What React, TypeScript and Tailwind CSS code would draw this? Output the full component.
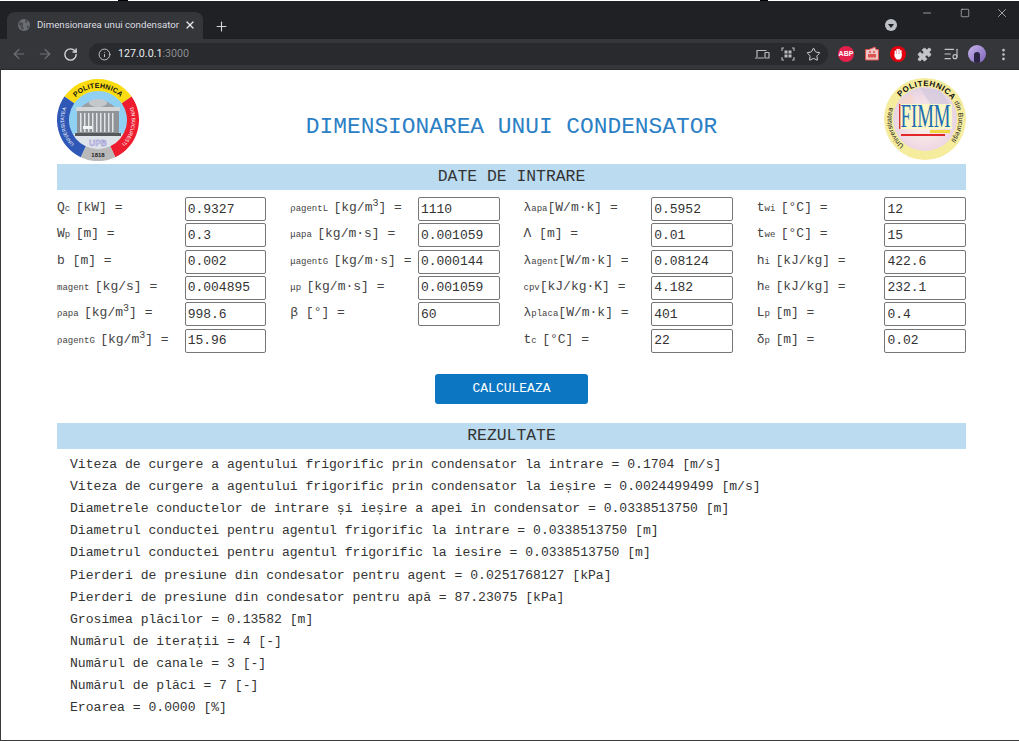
import React from "react";
import { ArrowLeft, ArrowRight, RotateCw, Info, Star, Puzzle, ListMusic, Plus, X, Minus, Square, MoreVertical } from "lucide-react";

const Sm = ({ children }: { children: React.ReactNode }) => <span className="text-[9px]">{children}</span>;
const Cube = () => <sup className="text-[10px] leading-none">3</sup>;

type Field = [React.ReactNode, string];
const columns: Field[][] = [
  [
    [<>Q<Sm>c </Sm>[kW] =</>, "0.9327"],
    [<>W<Sm>p </Sm>[m] =</>, "0.3"],
    [<>b [m] =</>, "0.002"],
    [<><Sm>magent </Sm>[kg/s] =</>, "0.004895"],
    [<><Sm>ρapa </Sm>[kg/m<Cube />] =</>, "998.6"],
    [<><Sm>ρagentG </Sm>[kg/m<Cube />] =</>, "15.96"],
  ],
  [
    [<><Sm>ρagentL </Sm>[kg/m<Cube />] =</>, "1110"],
    [<><Sm>μapa </Sm>[kg/m·s] =</>, "0.001059"],
    [<><Sm>μagentG </Sm>[kg/m·s] =</>, "0.000144"],
    [<><Sm>μp </Sm>[kg/m·s] =</>, "0.001059"],
    [<>β [°] =</>, "60"],
  ],
  [
    [<>λ<Sm>apa</Sm>[W/m·k] =</>, "0.5952"],
    [<>Λ [m] =</>, "0.01"],
    [<>λ<Sm>agent</Sm>[W/m·k] =</>, "0.08124"],
    [<><Sm>cpv</Sm>[kJ/kg·K] =</>, "4.182"],
    [<>λ<Sm>placa</Sm>[W/m·k] =</>, "401"],
    [<>t<Sm>c </Sm>[°C] =</>, "22"],
  ],
  [
    [<>t<Sm>wi </Sm>[°C] =</>, "12"],
    [<>t<Sm>we </Sm>[°C] =</>, "15"],
    [<>h<Sm>i </Sm>[kJ/kg] =</>, "422.6"],
    [<>h<Sm>e </Sm>[kJ/kg] =</>, "232.1"],
    [<>L<Sm>p </Sm>[m] =</>, "0.4"],
    [<>δ<Sm>p </Sm>[m] =</>, "0.02"],
  ],
];

const results = [
  "Viteza de curgere a agentului frigorific prin condensator la intrare = 0.1704 [m/s]",
  "Viteza de curgere a agentului frigorific prin condensator la ieșire = 0.0024499499 [m/s]",
  "Diametrele conductelor de intrare și ieșire a apei în condensator = 0.0338513750 [m]",
  "Diametrul conductei pentru agentul frigorific la intrare = 0.0338513750 [m]",
  "Diametrul conductei pentru agentul frigorific la iesire = 0.0338513750 [m]",
  "Pierderi de presiune din condesator pentru agent = 0.0251768127 [kPa]",
  "Pierderi de presiune din condesator pentru apă = 87.23075 [kPa]",
  "Grosimea plăcilor = 0.13582 [m]",
  "Numărul de iterații = 4 [-]",
  "Numărul de canale = 3 [-]",
  "Numărul de plăci = 7 [-]",
  "Eroarea = 0.0000 [%]",
];

function wedge(a0: number, a1: number, r0: number, r1: number, c = 41) {
  const p = (a: number, r: number) => {
    const t = ((a - 90) * Math.PI) / 180;
    return `${(c + r * Math.cos(t)).toFixed(2)} ${(c + r * Math.sin(t)).toFixed(2)}`;
  };
  const large = a1 - a0 > 180 ? 1 : 0;
  return `M${p(a0, r1)}A${r1} ${r1} 0 ${large} 1 ${p(a1, r1)}L${p(a1, r0)}A${r0} ${r0} 0 ${large} 0 ${p(a0, r0)}Z`;
}

function UpbLogo() {
  return (
    <svg width="82" height="82" viewBox="0 0 82 82" className="mt-px shrink-0">
      <defs>
        <path id="upbTop" d="M9 41A32 32 0 0 1 73 41" />
        <path id="upbLeft" d="M24.5 70.5A34 34 0 0 1 13.5 21" />
        <path id="upbRight" d="M68.5 21A34 34 0 0 1 57.5 70.5" />
      </defs>
      <circle cx="41" cy="41" r="29.5" fill="#8fd0f3" />
      <path d={wedge(120, 240, 0, 29.5)} fill="#dfe3ea" />
      <path d={wedge(-55, 55, 29, 41)} fill="#fbdc12" />
      <path d={wedge(55, 155, 29, 41)} fill="#ed1c2e" />
      <path d={wedge(155, 205, 29, 41)} fill="#b9b9b9" />
      <path d={wedge(205, 305, 29, 41)} fill="#2f57b5" />
      <path d="M24 28Q41 14 58 28Z" fill="#9a9fa3" />
      <ellipse cx="41" cy="24" rx="9" ry="4" fill="#c4c8cb" />
      <rect x="19" y="28" width="44" height="4" fill="#d4d6d8" />
      <rect x="20" y="32" width="42" height="24" fill="#8f9397" />
      <rect x="23" y="34" width="1.5" height="19" fill="#e2e4e5" />
      <rect x="27" y="34" width="1.5" height="19" fill="#e2e4e5" />
      <rect x="31" y="34" width="1.5" height="19" fill="#e2e4e5" />
      <rect x="35" y="34" width="1.5" height="19" fill="#e2e4e5" />
      <rect x="39" y="34" width="1.5" height="19" fill="#e2e4e5" />
      <rect x="43" y="34" width="1.5" height="19" fill="#e2e4e5" />
      <rect x="47" y="34" width="1.5" height="19" fill="#e2e4e5" />
      <rect x="51" y="34" width="1.5" height="19" fill="#e2e4e5" />
      <rect x="55" y="34" width="1.5" height="19" fill="#e2e4e5" />
      <rect x="26" y="47" width="9" height="3" fill="#f4f4f4" />
      <rect x="18" y="54" width="46" height="3" fill="#55595c" />
      <text x="41" y="67" textAnchor="middle" fontFamily="Liberation Sans, sans-serif" fontWeight="700" fontSize="8.5" fill="#c7c4ee" stroke="#8f8cc9" strokeWidth="0.3">UPB</text>
      <text x="41" y="77.5" textAnchor="middle" fontFamily="Liberation Sans, sans-serif" fontWeight="700" fontSize="6" fill="#222">1818</text>
      <text fontFamily="Liberation Sans, sans-serif" fontWeight="700" fontSize="7" fill="#111" letterSpacing="0.2">
        <textPath href="#upbTop" startOffset="50%" textAnchor="middle">POLITEHNICA</textPath>
      </text>
      <text fontFamily="Liberation Sans, sans-serif" fontSize="5" fill="#fff">
        <textPath href="#upbLeft" startOffset="50%" textAnchor="middle">UNIVERSITATEA</textPath>
      </text>
      <text fontFamily="Liberation Sans, sans-serif" fontSize="5" fill="#fff">
        <textPath href="#upbRight" startOffset="50%" textAnchor="middle">DIN BUCURESTI</textPath>
      </text>
    </svg>
  );
}

function FimmLogo() {
  return (
    <svg width="82" height="82" viewBox="0 0 82 82" className="shrink-0">
      <defs>
        <radialGradient id="fimmBg" cx="0.5" cy="0.55" r="0.55">
          <stop offset="0" stopColor="#fbf7e8" />
          <stop offset="0.7" stopColor="#f1dbe4" />
          <stop offset="1" stopColor="#e3d3e4" />
        </radialGradient>
        <path id="fimmTop" d="M8 41A33 33 0 0 1 74 41" />
        <path id="fimmLeft" d="M24 70A33.5 33.5 0 0 1 11 26" />
        <path id="fimmRight" d="M64 17A33.5 33.5 0 0 1 60 69" />
      </defs>
      <circle cx="41" cy="41" r="41" fill="#f6ec9d" />
      <circle cx="41" cy="41" r="32" fill="url(#fimmBg)" />
      <path d="M36 10L56 12L66 27L47 27Z" fill="#cdc6dc" opacity="0.6" />
      <path d="M14 24L28 15L30 27L16 29Z" fill="#f7d6c6" opacity="0.7" />
      <rect x="15" y="26" width="53" height="25" fill="#fdf6c8" />
      <rect x="15" y="26" width="1.4" height="25" fill="#d8322f" />
      <rect x="17" y="56" width="44" height="2" fill="#e2262a" />
      <rect x="46" y="52" width="20" height="3" fill="#f3d742" />
      <text x="16.5" y="49" fontFamily="Liberation Serif, serif" fontSize="33" fill="#1c6db3" textLength="50" lengthAdjust="spacingAndGlyphs">FIMM</text>
      <text fontFamily="Liberation Sans, sans-serif" fontWeight="700" fontSize="8" fill="#111" letterSpacing="0.5">
        <textPath href="#fimmTop" startOffset="52%" textAnchor="middle">POLITEHNICA</textPath>
      </text>
      <text fontFamily="Liberation Sans, sans-serif" fontSize="7" fill="#222">
        <textPath href="#fimmLeft" startOffset="50%" textAnchor="middle">Universitatea</textPath>
      </text>
      <text fontFamily="Liberation Sans, sans-serif" fontSize="7" fill="#222">
        <textPath href="#fimmRight" startOffset="50%" textAnchor="middle">din Bucureşti</textPath>
      </text>
    </svg>
  );
}

const Band = ({ children }: { children: React.ReactNode }) => (
  <div className="h-[26px] bg-[#bbdcf0] flex items-center justify-center text-[16.4px] text-[#333]">{children}</div>
);

function Browser() {
  return (
    <>
      <div className="h-px bg-white flex shrink-0">
        <div className="ml-[118px] w-[10px] bg-black" />
        <div className="ml-[632px] w-[8px] bg-black" />
      </div>
      <div className="h-[38px] bg-[#202124] flex shrink-0 text-[#e8eaed]">
        <div className="ml-[7px] mt-[11px] h-[27px] w-[196px] rounded-t-lg bg-[#35363a] flex items-center pl-[10px] pb-px">
          <svg width="14" height="14" viewBox="0 0 14 14" className="shrink-0">
            <circle cx="7" cy="7" r="6" fill="#6b6e72" />
            <path d="M3 3.5L6.5 5.5L5.5 8L7 10.5L5 12L3.5 8.5L1.5 6.5Z M8 1.5L11 3L9.5 5.5L8 4Z M9.5 7.5L12.5 7.5L10.5 11Z" fill="#4a4c50" />
          </svg>
          <span className="ml-[6px] mt-px w-[143px] text-[9.7px] whitespace-nowrap font-['Roboto',sans-serif] text-[#dcdee1]">Dimensionarea unui condensator</span>
          <X size={12} strokeWidth={2.4} className="ml-[4px] shrink-0" />
        </div>
        <Plus size={15} strokeWidth={1.8} className="ml-[11px] mt-[18px] text-[#d5d7da]" />
        <div className="ml-auto flex items-start mr-[10px]">
          <div className="mt-[18px] w-3 h-3 rounded-full bg-[#bdc1c6] flex items-center justify-center">
            <div className="w-0 h-0 border-x-[3.5px] border-x-transparent border-t-[4px] border-t-[#202124] mt-px" />
          </div>
          <Minus size={12} strokeWidth={1.4} className="ml-[24px] mt-[6px] text-[#c9cbce]" />
          <Square size={10} strokeWidth={1.6} className="ml-[27px] mt-[7px] text-[#c9cbce]" />
          <X size={14} strokeWidth={1.2} className="ml-[25px] mt-[5px] text-[#d5d7da]" />
        </div>
      </div>
      <div className="h-[30px] bg-[#35363a] flex items-center shrink-0">
        <ArrowLeft size={16} strokeWidth={1.8} className="ml-[11px] text-[#6f7276]" />
        <ArrowRight size={16} strokeWidth={1.8} className="ml-[10px] text-[#6f7276]" />
        <RotateCw size={15} strokeWidth={2.2} className="ml-[10px] text-[#d5d7da]" />
        <div className="ml-[11px] w-[739px] h-[22px] rounded-full bg-[#292a2d] flex items-center pl-[9px] pr-[7px]">
          <Info size={13} strokeWidth={1.6} className="text-[#d5d7da] shrink-0" />
          <span className="ml-[7px] mt-px text-[10.7px] font-['Roboto',sans-serif] text-[#e8eaed]">127.0.0.1<span className="text-[#8a8d91]">:3000</span></span>
          <svg width="16" height="16" viewBox="0 0 16 16" className="ml-auto text-[#b8babe]" fill="none" stroke="currentColor" strokeWidth="1.2">
            <path d="M3 11V4.5H12.5M1 12H10" />
            <rect x="11" y="6.5" width="4" height="5.5" rx="0.6" />
          </svg>
          <svg width="16" height="16" viewBox="0 0 16 16" className="ml-[10px] text-[#b8babe]" fill="none" stroke="currentColor" strokeWidth="1.1">
            <path d="M4 2H2V5M12 2H14V5M2 11V14H4M14 11V14H12" />
            <g fill="currentColor" stroke="none">
              <rect x="4.5" y="4.5" width="3" height="3" /><rect x="8.5" y="4.5" width="3" height="3" />
              <rect x="4.5" y="8.5" width="3" height="3" /><rect x="8.5" y="8.5" width="3" height="3" />
            </g>
          </svg>
          <Star size={15} strokeWidth={1.6} className="ml-[10px] text-[#d5d7da]" />
        </div>
        <div className="ml-[10px] w-4 h-4 rounded-full bg-[#e3204c] flex items-center justify-center text-[7px] font-bold text-white font-['Liberation_Sans',sans-serif]">ABP</div>
        <svg width="16" height="16" viewBox="0 0 16 16" className="ml-[10px]">
          <path d="M1.5 3.5H5L11 1L12 3.5H14.5V14H1.5Z" fill="#f0c4c4" stroke="#d9534f" strokeWidth="1" />
          <path d="M4 8H12V11.5H4Z" fill="#d9534f" />
          <circle cx="6" cy="6" r="1" fill="#d9534f" /><circle cx="10" cy="6" r="1" fill="#d9534f" />
        </svg>
        <svg width="16" height="16" viewBox="0 0 16 16" className="ml-[10px]">
          <circle cx="8" cy="8" r="8" fill="#e3000f" />
          <g fill="#fff">
            <rect x="4.6" y="4.4" width="1.6" height="6" rx="0.8" />
            <rect x="6.4" y="2.8" width="1.6" height="6" rx="0.8" />
            <rect x="8.2" y="2.8" width="1.6" height="6" rx="0.8" />
            <rect x="10" y="4" width="1.6" height="6" rx="0.8" />
            <path d="M4.6 8H11.6V10.5C11.6 12.6 10.2 13.6 8.2 13.6C6.4 13.6 5.6 12.6 4.6 10.5Z" />
          </g>
        </svg>
        <Puzzle size={15} className="ml-[11px] text-[#c4c6ca]" fill="#c4c6ca" strokeWidth={1.4} />
        <ListMusic size={16} strokeWidth={1.7} className="ml-[11px] text-[#c4c6ca]" />
        <div className="ml-[9px] w-[18px] h-[18px] rounded-full bg-gradient-to-br from-[#c9b6ea] to-[#7f63bd] flex items-end justify-center overflow-hidden shrink-0">
          <div className="w-[6px] h-[11px] bg-[#2a2440] rounded-t-full" />
        </div>
        <MoreVertical size={15} strokeWidth={2.2} className="ml-[9.5px] text-[#c4c6ca]" />
      </div>
      <div className="h-px bg-[#2a2b2e] shrink-0" />
    </>
  );
}

export default function App() {
  return (
    <div className="h-[741px] w-[1019px] overflow-hidden flex flex-col bg-white font-['Liberation_Mono',monospace] text-[13px] text-[#333]">
      <Browser />
      <div className="flex-1 border-l border-[#3a3a3a] pl-[56px] min-h-0">
        <div className="w-[909px]">
          <div className="h-[94px] pt-2 flex items-start justify-between">
            <UpbLogo />
            <h1 className="mt-[35px] text-[22.85px] leading-[28px] text-[#2b80c5] whitespace-nowrap">DIMENSIONAREA UNUI CONDENSATOR</h1>
            <FimmLogo />
          </div>
          <Band>DATE DE INTRARE</Band>
          <div className="mt-[7px] h-[156px] grid grid-cols-4 gap-x-6">
            {columns.map((col, i) => (
              <div key={i} className="flex flex-col gap-[2.33px]">
                {col.map(([label, value], j) => (
                  <div key={j} className="h-6 flex justify-between items-start">
                    <span className="whitespace-pre leading-[21px] text-[#444]">{label}</span>
                    <input
                      readOnly
                      value={value}
                      className="w-[81.6px] h-6 shrink-0 border border-[#767676] rounded-[2px] pl-[2px] text-[13px] text-[#333] bg-white outline-none"
                    />
                  </div>
                ))}
              </div>
            ))}
          </div>
          <div className="mt-[21px] flex justify-center">
            <button className="w-[153px] h-[30px] rounded-[3px] bg-[#0c76c2] text-white text-[13px]">CALCULEAZA</button>
          </div>
          <div className="mt-[19px]">
            <Band>REZULTATE</Band>
          </div>
          <div className="pt-[5px] pl-[13px] text-[13.09px]">
            {results.map((r) => (
              <div key={r} className="h-[22.12px] leading-[22px] whitespace-pre">{r}</div>
            ))}
          </div>
        </div>
      </div>
      <div className="h-px bg-[#3a3a3a] shrink-0" />
    </div>
  );
}
